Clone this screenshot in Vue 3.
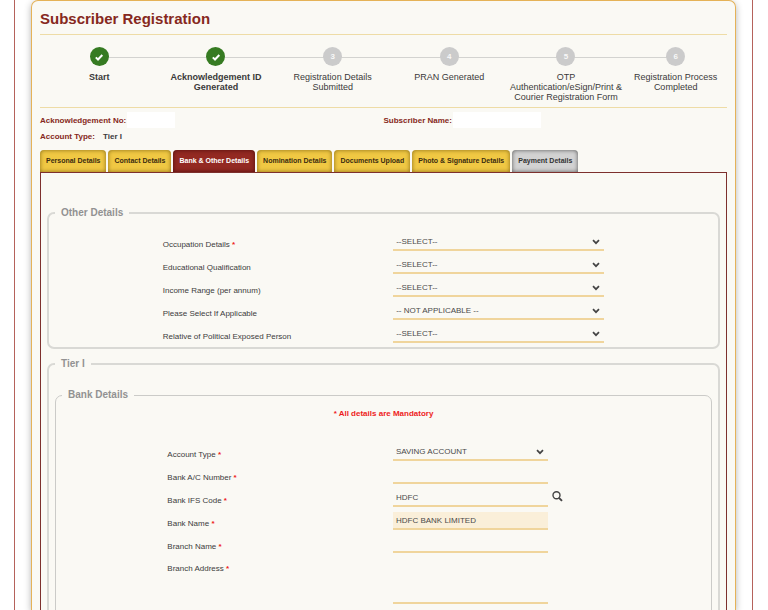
<script setup>
import { reactive, ref } from 'vue'

const steps = [
  { label: 'Start', done: true },
  { label: 'Acknowledgement ID Generated', done: true },
  { label: 'Registration Details Submitted' },
  { label: 'PRAN Generated' },
  { label: 'OTP Authentication/eSign/Print & Courier Registration Form' },
  { label: 'Registration Process Completed' },
]

const tabs = [
  { label: 'Personal Details' },
  { label: 'Contact Details' },
  { label: 'Bank & Other Details' },
  { label: 'Nomination Details' },
  { label: 'Documents Upload' },
  { label: 'Photo & Signature Details' },
  { label: 'Payment Details', disabled: true },
]
const activeTab = ref('Bank & Other Details')

const otherFields = [
  { id: 'occupation', label: 'Occupation Details', required: true, value: '--SELECT--' },
  { id: 'education', label: 'Educational Qualification', value: '--SELECT--' },
  { id: 'income', label: 'Income Range (per annum)', value: '--SELECT--' },
  { id: 'applicable', label: 'Please Select If Applicable', value: '-- NOT APPLICABLE --' },
  { id: 'relative', label: 'Relative of Political Exposed Person', value: '--SELECT--' },
]

const bank = reactive({
  accountType: 'SAVING ACCOUNT',
  number: '',
  ifs: 'HDFC',
  name: 'HDFC BANK LIMITED',
  branch: '',
  address: '',
})
</script>

<template>
  <div class="page">
    <div class="frame">
      <main class="card">
        <h1>Subscriber Registration</h1>

        <ol class="steps">
          <li v-for="(step, i) in steps" :key="step.label" :class="{ done: step.done }">
            <span class="dot">
              <svg v-if="step.done" viewBox="0 0 10 10" aria-hidden="true">
                <path d="M1.8 5.4 4 7.5 8.3 3" />
              </svg>
              <template v-else>{{ i + 1 }}</template>
            </span>
            <span class="step-label">{{ step.label }}</span>
          </li>
        </ol>

        <dl class="summary">
          <div class="pair">
            <dt>Acknowledgement No:</dt>
            <dd class="blank"></dd>
          </div>
          <div class="pair">
            <dt>Subscriber Name:</dt>
            <dd class="blank wide"></dd>
          </div>
          <div class="pair type">
            <dt>Account Type:</dt>
            <dd>Tier I</dd>
          </div>
        </dl>

        <nav class="tabs">
          <button
            v-for="tab in tabs"
            :key="tab.label"
            type="button"
            :disabled="tab.disabled"
            :class="{ active: tab.label === activeTab }"
            @click="activeTab = tab.label"
          >{{ tab.label }}</button>
        </nav>

        <form class="panel" @submit.prevent>
          <fieldset class="other">
            <legend>Other Details</legend>
            <div v-for="field in otherFields" :key="field.id" class="row">
              <label :for="field.id">{{ field.label }} <em v-if="field.required">*</em></label>
              <div class="select">
                <select :id="field.id">
                  <option>{{ field.value }}</option>
                </select>
                <svg viewBox="0 0 8 6" aria-hidden="true"><path d="M1 1.2 4 4.2 7 1.2" /></svg>
              </div>
            </div>
          </fieldset>

          <fieldset class="tier">
            <legend>Tier I</legend>
            <fieldset class="bank">
              <legend>Bank Details</legend>
              <p class="note">* All details are Mandatory</p>
              <div class="row">
                <label for="accountType">Account Type <em>*</em></label>
                <div class="select">
                  <select id="accountType" v-model="bank.accountType">
                    <option>SAVING ACCOUNT</option>
                  </select>
                  <svg viewBox="0 0 8 6" aria-hidden="true"><path d="M1 1.2 4 4.2 7 1.2" /></svg>
                </div>
              </div>
              <div class="row">
                <label for="number">Bank A/C Number <em>*</em></label>
                <input id="number" v-model="bank.number" type="text" />
              </div>
              <div class="row">
                <label for="ifs">Bank IFS Code <em>*</em></label>
                <input id="ifs" v-model="bank.ifs" type="text" />
                <button type="button" class="search" aria-label="Search">
                  <svg viewBox="0 0 11 11" aria-hidden="true">
                    <circle cx="4.5" cy="4.3" r="3.5" />
                    <path d="M7 6.9 10 9.9" />
                  </svg>
                </button>
              </div>
              <div class="row">
                <label for="bankName">Bank Name <em>*</em></label>
                <input id="bankName" v-model="bank.name" type="text" readonly />
              </div>
              <div class="row">
                <label for="branch">Branch Name <em>*</em></label>
                <input id="branch" v-model="bank.branch" type="text" />
              </div>
              <div class="row tall">
                <label for="address">Branch Address <em>*</em></label>
                <textarea id="address" v-model="bank.address"></textarea>
              </div>
            </fieldset>
          </fieldset>
        </form>
      </main>
    </div>
  </div>
</template>

<style>
body {
  background: #fff;
}
</style>

<style scoped>
* {
  box-sizing: border-box;
}

.page {
  display: flex;
  height: 100vh;
  overflow: hidden;
  padding: 0 15px 0 14px;
  font-family: "Liberation Sans", Arial, sans-serif;
  font-size: 8px;
  color: #3c3c3c;
}

.frame {
  flex: 1;
  display: flex;
  min-width: 0;
  min-height: max-content;
  padding: 0 16px;
  border: solid #b5625b;
  border-width: 0 1px;
}

.card {
  flex: 1;
  min-width: 0;
  padding: 9px 8px 0;
  background: #faf9f4;
  border: 1px solid #e5b257;
  border-bottom: 0;
  border-radius: 7px 7px 0 0;
  box-shadow: 0 2px 7px rgba(0, 0, 0, 0.3);
}

h1 {
  margin: 0;
  padding-bottom: 7px;
  border-bottom: 1px solid #eedca6;
  font-size: 15px;
  line-height: 17px;
  color: #862820;
}

.steps {
  position: relative;
  display: grid;
  grid-template-columns: repeat(5, 117fr) 103fr;
  margin: 0;
  padding: 12px 0 5px 1px;
  list-style: none;
  border-bottom: 1px solid #eedca6;
}

.steps::before {
  content: "";
  position: absolute;
  top: 22px;
  left: 9%;
  right: 8%;
  height: 1px;
  background: #d3d3d0;
}

.steps li {
  position: relative;
  display: flex;
  flex-direction: column;
  align-items: center;
  gap: 6px;
  font-size: 9px;
  line-height: 10px;
  text-align: center;
}

.step-label {
  max-width: 114px;
  color: #3a3a3a;
}

.done .step-label {
  max-width: 100px;
  font-weight: bold;
}

.dot {
  display: flex;
  align-items: center;
  justify-content: center;
  width: 19px;
  height: 19px;
  border-radius: 50%;
  background: #cbcbcb;
  color: #f8f8f8;
  font-size: 8px;
  font-weight: bold;
}

.done .dot {
  background: #367b22;
}

.dot svg {
  width: 10px;
  height: 10px;
  fill: none;
  stroke: #fff;
  stroke-width: 2;
}

.summary {
  display: grid;
  grid-template-columns: 1fr 1fr;
  margin: 0;
  padding: 4px 0 6px;
  font-weight: bold;
}

.pair {
  display: flex;
  align-items: center;
  gap: 1px;
  height: 16px;
}

.pair.type {
  gap: 8px;
}

.pair dt {
  color: #862820;
}

.pair dd {
  margin: 0;
}

.blank {
  width: 48px;
  height: 16px;
  background: #fff;
}

.blank.wide {
  width: 88px;
}

.tabs {
  display: flex;
  gap: 2px;
}

.tabs button {
  height: 22px;
  padding: 0 6px;
  border: 0;
  border-radius: 4px 4px 0 0;
  background: #f0c843;
  box-shadow: inset 0 0 4px rgba(90, 65, 0, 0.7);
  font: bold 7px/22px "Liberation Sans", Arial, sans-serif;
  color: #3b2c10;
  white-space: nowrap;
}

.tabs button.active {
  background: #932922;
  box-shadow: inset 0 0 4px rgba(50, 0, 0, 0.7);
  color: #fff;
}

.tabs button:disabled {
  background: #d2d2d2;
  box-shadow: inset 0 0 4px rgba(0, 0, 0, 0.6);
  color: #333;
}

.panel {
  display: flex;
  flex-direction: column;
  gap: 9px;
  padding: 34px 6px 0;
  border: 1px solid #7d302d;
  border-bottom: 0;
}

fieldset {
  min-width: 0;
  margin: 0;
  padding: 0;
  border: 2px solid #d9d9d5;
  border-radius: 7px;
}

legend {
  margin-left: 6px;
  padding: 0 6px;
  font-size: 10px;
  font-weight: bold;
  line-height: 12px;
  color: #929292;
}

.tier > legend {
  margin-left: 0;
}

.other {
  padding: 9px 0 4px;
}

.tier {
  padding: 19px 6px 0;
}

.bank {
  padding-bottom: 80px;
  border-width: 1px;
  border-color: #cbcbc8;
}

.note {
  margin: 7px 0 18px;
  font-weight: bold;
  line-height: 12px;
  text-align: center;
  color: #ee1c1c;
}

.row {
  display: grid;
  grid-template-columns: 41.5fr 38fr 20.5fr;
  align-items: end;
  height: 23px;
  margin-left: 17%;
}

.bank .row {
  grid-template-columns: 41.5fr 28.5fr 30fr;
}

.row.tall {
  align-items: start;
  height: 51px;
}

.tall label {
  padding-top: 10px;
}

.row label {
  line-height: 12px;
  white-space: nowrap;
}

em {
  font-style: normal;
  font-weight: bold;
  color: #ee1c1c;
}

input,
select,
textarea {
  display: block;
  width: 100%;
  height: 18px;
  margin: 0;
  padding: 0 3px;
  border: 0;
  border-bottom: 2px solid #f0d59c;
  border-radius: 0;
  outline: 0;
  appearance: none;
  background: transparent;
  font: 8px/16px "Liberation Sans", Arial, sans-serif;
  color: #4a4a4a;
}

select {
  padding-top: 1px;
}

textarea {
  height: 51px;
  resize: none;
}

input[readonly] {
  background: #faefd9;
}

.select {
  position: relative;
}

.select svg {
  position: absolute;
  top: 6px;
  right: 4px;
  width: 8px;
  height: 6px;
  fill: none;
  stroke: #444;
  stroke-width: 1.7;
  pointer-events: none;
}

.search {
  justify-self: start;
  align-self: start;
  width: 11px;
  height: 11px;
  margin: 7px 0 0 4px;
  padding: 0;
  border: 0;
  background: none;
}

.search svg {
  display: block;
  width: 11px;
  height: 11px;
  fill: none;
  stroke: #444;
  stroke-width: 1.4;
}

.search path {
  stroke-width: 2;
}
</style>
